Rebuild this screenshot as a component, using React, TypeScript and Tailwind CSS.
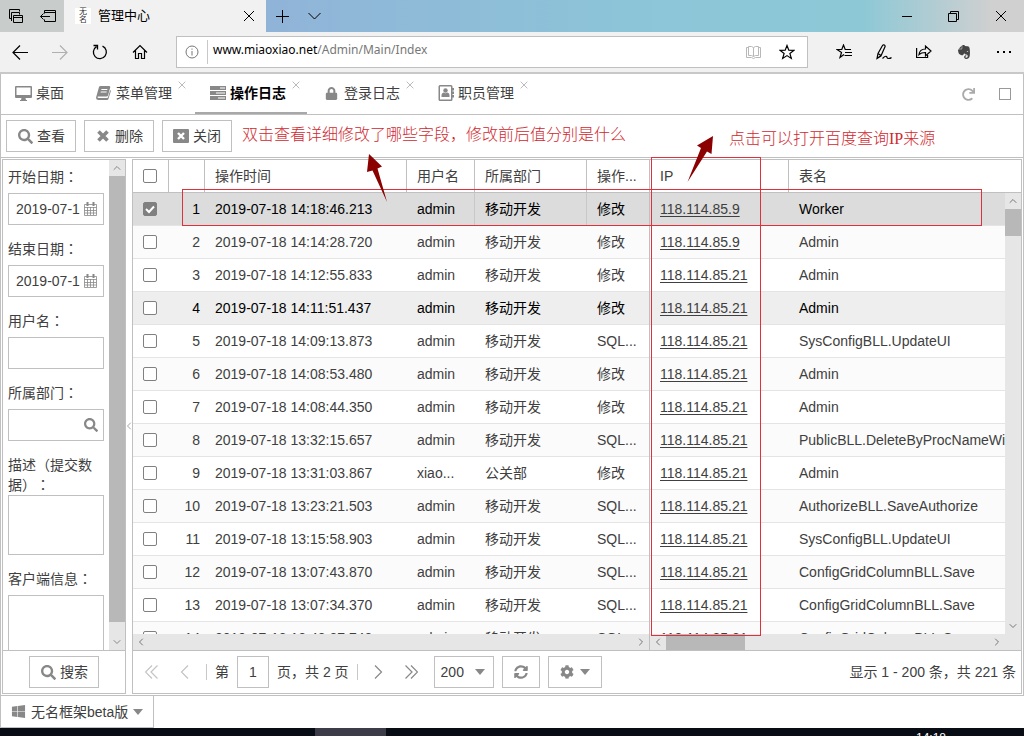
import { useState, type ReactNode } from "react";
import clsx from "clsx";
import { ChevronDown, ChevronLeft, ChevronRight, ChevronUp } from "lucide-react";
import {
	FaCog,
	FaEvernote,
	FaLock,
	FaRedo,
	FaSearch,
	FaSyncAlt,
	FaWindows,
} from "react-icons/fa";

type LogRow = {
	id: number;
	time: string;
	user: string;
	dept: string;
	action: string;
	ip: string;
	table: string;
};

const rows: LogRow[] = [
	{ id: 1, time: "2019-07-18 14:18:46.213", user: "admin", dept: "移动开发", action: "修改", ip: "118.114.85.9", table: "Worker" },
	{ id: 2, time: "2019-07-18 14:14:28.720", user: "admin", dept: "移动开发", action: "修改", ip: "118.114.85.9", table: "Admin" },
	{ id: 3, time: "2019-07-18 14:12:55.833", user: "admin", dept: "移动开发", action: "修改", ip: "118.114.85.21", table: "Admin" },
	{ id: 4, time: "2019-07-18 14:11:51.437", user: "admin", dept: "移动开发", action: "修改", ip: "118.114.85.21", table: "Admin" },
	{ id: 5, time: "2019-07-18 14:09:13.873", user: "admin", dept: "移动开发", action: "SQL...", ip: "118.114.85.21", table: "SysConfigBLL.UpdateUI" },
	{ id: 6, time: "2019-07-18 14:08:53.480", user: "admin", dept: "移动开发", action: "修改", ip: "118.114.85.21", table: "Admin" },
	{ id: 7, time: "2019-07-18 14:08:44.350", user: "admin", dept: "移动开发", action: "修改", ip: "118.114.85.21", table: "Admin" },
	{ id: 8, time: "2019-07-18 13:32:15.657", user: "admin", dept: "移动开发", action: "SQL...", ip: "118.114.85.21", table: "PublicBLL.DeleteByProcNameWithLog" },
	{ id: 9, time: "2019-07-18 13:31:03.867", user: "xiao...", dept: "公关部", action: "修改", ip: "118.114.85.21", table: "Admin" },
	{ id: 10, time: "2019-07-18 13:23:21.503", user: "admin", dept: "移动开发", action: "SQL...", ip: "118.114.85.21", table: "AuthorizeBLL.SaveAuthorize" },
	{ id: 11, time: "2019-07-18 13:15:58.903", user: "admin", dept: "移动开发", action: "SQL...", ip: "118.114.85.21", table: "SysConfigBLL.UpdateUI" },
	{ id: 12, time: "2019-07-18 13:07:43.870", user: "admin", dept: "移动开发", action: "SQL...", ip: "118.114.85.21", table: "ConfigGridColumnBLL.Save" },
	{ id: 13, time: "2019-07-18 13:07:34.370", user: "admin", dept: "移动开发", action: "SQL...", ip: "118.114.85.21", table: "ConfigGridColumnBLL.Save" },
	{ id: 14, time: "2019-07-18 12:48:27.743", user: "admin", dept: "移动开发", action: "SQL...", ip: "118.114.85.21", table: "ConfigGridColumnBLL.Save" },
];

export default function App() {
	return (
		<div className="flex h-screen flex-col overflow-hidden bg-white font-['Liberation_Sans','Noto_Sans_CJK_SC',sans-serif] text-sm text-[#404040]">
			<TitleBar />
			<AddressBar />
			<div className="flex min-h-0 flex-1 flex-col border-x border-[#c0c0c0]">
				<PageTabs />
				<main className="relative flex min-h-0 flex-1 flex-col">
					<Toolbar />
					<div className="flex min-h-0 flex-1 gap-1.5 border-b border-[#c0c0c0] p-px">
						<SearchPanel />
						<LogPanel />
					</div>
					<Annotations />
				</main>
			</div>
			<StartBar />
			<OsTaskbar />
		</div>
	);
}

function TitleBar() {
	return (
		<header className="flex h-8 shrink-0 bg-[linear-gradient(to_right,#90b4d8_27%,#8cc6d8_65%,#8cc8d6_84%,#d0d0d0_97%)] text-black">
			<div className="flex w-16 items-center gap-4 bg-[#c8cccb] pl-2">
				<button aria-label="标签页预览">
					<svg width="16" height="16" viewBox="0 0 16 16" fill="none" stroke="currentColor">
						<path d="M3.500 10.500h-2v-9h10v2M3.500 13V4.500h8v2M6 7.500h8.500v7H5.500v-7zM6 9.500h8" />
					</svg>
				</button>
				<button aria-label="搁置标签页">
					<svg width="16" height="16" viewBox="0 0 16 16" fill="none" stroke="currentColor">
						<path d="M4.500 5.500v-3h11v11h-11v-2M4.500 4.500h11M.5 8.500H10M3.500 5.500l-3 3 3 3" />
					</svg>
				</button>
			</div>
			<div className="flex w-[202px] items-center bg-[#f1f1f1] px-[11px]">
				<span className="flex size-4 flex-col items-center justify-center bg-white text-[8px] leading-2 text-[#333]">
					<span>无</span>
					<span>名</span>
				</span>
				<span className="ml-[7px] flex-1 text-[13px]">管理中心</span>
				<button aria-label="关闭标签页">
					<CrossIcon className="size-3" />
				</button>
			</div>
			<div className="flex flex-1 items-center gap-[18px] pl-2.5">
				<button aria-label="新建标签页">
					<svg width="14" height="14" viewBox="0 0 14 14" stroke="currentColor">
						<path d="M6.500 1v13M0 7.500h13" />
					</svg>
				</button>
				<button aria-label="标签页列表">
					<svg width="13" height="8" viewBox="0 0 13 8" fill="none" stroke="currentColor">
						<path d="M.5 1l6 6 6-6" />
					</svg>
				</button>
			</div>
			<div className="flex items-center gap-9 pr-[17px]">
				<button aria-label="最小化">
					<svg width="10" height="10" viewBox="0 0 10 10" stroke="currentColor">
						<path d="M0 5.500h10" />
					</svg>
				</button>
				<button aria-label="还原">
					<svg width="11" height="11" viewBox="0 0 11 11" fill="none" stroke="currentColor">
						<path d="M.5 2.500h8v8h-8zM2.500 2.500v-2h8v8h-2" />
					</svg>
				</button>
				<button aria-label="关闭">
					<CrossIcon className="size-3" />
				</button>
			</div>
		</header>
	);
}

function AddressBar() {
	return (
		<nav className="flex h-[42px] shrink-0 items-center border-b-2 border-[#c8c8c8] bg-[#f1f1f1] text-black">
			<div className="flex w-44 items-center gap-6 pl-3">
				<button aria-label="后退">
					<svg width="16" height="16" viewBox="0 0 16 16" fill="none" stroke="currentColor" strokeWidth="1.2">
						<path d="M1 8.500h15M8 1.500l-7 7 7 7" />
					</svg>
				</button>
				<button aria-label="前进" className="text-[#b0b0b0]">
					<svg width="16" height="16" viewBox="0 0 16 16" fill="none" stroke="currentColor" strokeWidth="1.2">
						<path d="M0 8.500h15M8 1.500l7 7-7 7" />
					</svg>
				</button>
				<button aria-label="刷新">
					<svg width="16" height="16" viewBox="0 0 16 16" fill="none" stroke="currentColor" strokeWidth="1.3">
						<path d="M10.500 2.200A6.500 6.500 0 1 1 4.500 2.600M1.500 1.500h4v4" />
					</svg>
				</button>
				<button aria-label="主页">
					<svg width="16" height="16" viewBox="0 0 16 16" fill="none" stroke="currentColor" strokeWidth="1.2">
						<path d="M1 8.500l7-7 7 7M3.500 6.500v8h3v-5h3v5h3v-8" />
					</svg>
				</button>
			</div>
			<div className="flex h-8 flex-1 items-center border border-[#c0c0c0] bg-white">
				<svg className="ml-2 shrink-0 text-[#777]" width="14" height="14" viewBox="0 0 14 14" fill="none" stroke="currentColor">
					<circle cx="7" cy="7" r="6" />
					<path d="M7 6v4.500M7 3.500v1.200" />
				</svg>
				<a
					href="#"
					className="ml-2 flex-1 border-l border-[#c8c8c8] pb-1 pl-[5px] font-['Noto_Sans',sans-serif] text-xs leading-5 text-[#777]"
				>
					<span className="text-black">www.miaoxiao.net</span>/Admin/Main/Index
				</a>
				<button aria-label="阅读视图" className="mr-[18px] text-[#b8b8b8]">
					<svg width="15" height="14" viewBox="0 0 15 14" fill="none" stroke="currentColor">
						<path d="M2.500 1.500h3l2 1 2-1h3v9h-3l-2 1-2-1h-3zM7.500 2.500v9M2.500 2.500h-2v10h5l2 1 2-1h5v-10h-2" />
					</svg>
				</button>
				<button aria-label="收藏" className="mr-3">
					<svg width="16" height="16" viewBox="0 0 16 16" fill="none" stroke="currentColor" strokeWidth="1.200">
						<path d="M8 1.500l1.800 4.700 5 .2-3.900 3.100 1.400 4.900L8 11.600l-4.300 2.800 1.400-4.900L1.200 6.400l5-.2z" />
					</svg>
				</button>
			</div>
			<div className="flex items-center gap-6 pr-3 pl-7">
				<button aria-label="中心">
					<svg width="16" height="16" viewBox="0 0 16 16" fill="none" stroke="currentColor" strokeWidth="1.200">
						<path d="M8 10.500l-4 3 1.500-5L1 5.500h4.800L7.500 1l1.700 4.500H15M9 8.500h7M8.500 11.500H16" />
					</svg>
				</button>
				<button aria-label="做笔记">
					<svg width="16" height="16" viewBox="0 0 16 16" fill="none" stroke="currentColor" strokeWidth="1.200">
						<path d="M1 14.500l1-5 4.500-8c1-1.500 3.200-.2 2.400 1.500l-4 9zM2 9.500l3 2M1 14.500l4-3M6.500 14.500c2-2 3-3 4-2s0 2 2 2c1 0 2 0 3-1" />
					</svg>
				</button>
				<button aria-label="共享">
					<svg width="16" height="16" viewBox="0 0 16 16" fill="none" stroke="currentColor" strokeWidth="1.200">
						<path d="M.6 4v9.500h11V11M3 10.500c.5-4 3-5.500 6.500-5.500V2l5.500 5-5.500 5V8.500C6.500 8.500 4.500 9 3 10.500z" />
					</svg>
				</button>
				<button aria-label="Evernote" className="text-[#444]">
					<FaEvernote size={16} />
				</button>
				<button aria-label="更多">
					<svg width="16" height="4" viewBox="0 0 16 4" fill="currentColor">
						<path d="M1 1h2v2H1zM7 1h2v2H7zM13 1h2v2h-2z" />
					</svg>
				</button>
			</div>
		</nav>
	);
}

const pageTabs: { title: string; icon: ReactNode; closable?: boolean }[] = [
	{ title: "桌面", icon: <DesktopIcon /> },
	{ title: "菜单管理", icon: <BookIcon />, closable: true },
	{ title: "操作日志", icon: <TasksIcon />, closable: true },
	{ title: "登录日志", icon: <FaLock size={13} />, closable: true },
	{ title: "职员管理", icon: <ContactIcon />, closable: true },
];

function PageTabs() {
	const [active, setActive] = useState("操作日志");

	return (
		<div className="flex h-[41px] shrink-0 items-stretch justify-between border-b border-[#c0c0c0]">
			<div className="flex gap-0.5">
				{pageTabs.map((tab) => (
					<div
						key={tab.title}
						className={clsx(
							"relative flex border-b-2",
							active === tab.title ? "border-[#a8a8a8] font-bold text-black" : "border-transparent",
							tab.closable ? "w-28" : "w-[78px]",
						)}
					>
						<button
							className="flex items-center gap-1 pl-3.5"
							onClick={() => setActive(tab.title)}
						>
							<span className="flex w-[17px] justify-center text-[#888]">{tab.icon}</span>
							{tab.title}
						</button>
						{tab.closable && (
							<button
								aria-label={`关闭${tab.title}`}
								className="absolute top-[7px] right-[7px] text-[#999]"
							>
								<CrossIcon className="size-2" />
							</button>
						)}
					</div>
				))}
			</div>
			<div className="flex items-center gap-6 pr-3 text-[#aaa]">
				<button aria-label="刷新">
					<FaRedo size={13} />
				</button>
				<button aria-label="最大化" className="h-3 w-3 border border-[#999]" />
			</div>
		</div>
	);
}

function Toolbar() {
	return (
		<div className="flex h-[43px] shrink-0 items-center gap-2 border-b border-[#c0c0c0] px-[5px]">
			<ToolButton icon={<FaSearch size={15} />}>查看</ToolButton>
			<ToolButton
				icon={
					<svg width="12" height="12" viewBox="0 0 12 12" stroke="currentColor" strokeWidth="3.600">
						<path d="M1.500 1.500l9 9M10.500 1.500l-9 9" />
					</svg>
				}
			>
				删除
			</ToolButton>
			<ToolButton
				icon={
					<svg width="16" height="14" viewBox="0 0 16 14">
						<path d="M1 0h14q1 0 1 1v12q0 1-1 1H1q-1 0-1-1V1q0-1 1-1z" fill="currentColor" />
						<path d="M5 4l6 6M11 4l-6 6" stroke="#fff" strokeWidth="2.400" />
					</svg>
				}
			>
				关闭
			</ToolButton>
		</div>
	);
}

function ToolButton({ icon, children }: { icon: ReactNode; children: ReactNode }) {
	return (
		<button className="flex h-8 w-[70px] items-center justify-center gap-1 border border-[#c0c0c0] bg-white">
			<span className="flex w-4 justify-center text-[#888]">{icon}</span>
			{children}
		</button>
	);
}

function SearchPanel() {
	return (
		<form
			className="flex w-[124px] shrink-0 flex-col border border-[#c0c0c0]"
			onSubmit={(e) => e.preventDefault()}
		>
			<div className="flex min-h-0 flex-1">
				<div className="min-w-0 flex-1 overflow-hidden px-[5px]">
					<Field id="start" label="开始日期">
						<DateInput id="start" />
					</Field>
					<Field id="end" label="结束日期">
						<DateInput id="end" />
					</Field>
					<Field id="user" label="用户名">
						<input id="user" className="block h-8 w-full border border-[#c0c0c0] px-1.5" />
					</Field>
					<Field id="dept" label="所属部门">
						<div className="flex h-8 items-center border border-[#c0c0c0] pr-[5px]">
							<input id="dept" className="min-w-0 flex-1 px-1.5" />
							<button aria-label="选择部门" className="text-[#888]">
								<FaSearch size={14} />
							</button>
						</div>
					</Field>
					<Field id="desc" label="描述（提交数据）">
						<textarea id="desc" className="block h-15 w-full resize-none border border-[#c0c0c0]" />
					</Field>
					<Field id="client" label="客户端信息">
						<textarea id="client" className="block h-15 w-full resize-none border border-[#c0c0c0]" />
					</Field>
				</div>
				<div className="flex w-4 flex-col items-center bg-[#e6e6e6] text-[#888]">
					<ChevronUp size={12} className="my-0.5" />
					<div className="w-full flex-1 bg-[#b8b8b8]" />
					<ChevronDown size={12} className="mt-3.5 mb-0.5" />
				</div>
			</div>
			<div className="flex h-[43px] shrink-0 items-center justify-center border-t border-[#c0c0c0]">
				<ToolButton icon={<FaSearch size={15} />}>搜索</ToolButton>
			</div>
		</form>
	);
}

function Field({ id, label, children }: { id: string; label: string; children: ReactNode }) {
	return (
		<div className="pb-[7px]">
			<label
				htmlFor={id}
				className="block min-h-[33px] pt-[7px] leading-5 [text-spacing-trim:space-all]"
			>
				{label}
				<span className="inline-block font-['Noto_Sans_CJK_TC',sans-serif] leading-none">：</span>
			</label>
			{children}
		</div>
	);
}

function DateInput({ id }: { id: string }) {
	return (
		<div className="flex h-8 items-center border border-[#c0c0c0] pr-1.5 pl-[7px]">
			<input id={id} defaultValue="2019-07-1" className="min-w-0 flex-1" />
			<button aria-label="选择日期" className="text-[#888]">
				<CalendarIcon />
			</button>
		</div>
	);
}

function LogPanel() {
	const [checked, setChecked] = useState<number[]>([1]);

	function toggle(id: number) {
		setChecked(checked.includes(id) ? checked.filter((c) => c !== id) : [...checked, id]);
	}

	return (
		<section className="relative flex min-w-0 flex-1 flex-col border border-[#c0c0c0]">
			<ChevronLeft size={12} strokeWidth={1.5} className="absolute top-65 -left-2.5 text-[#888]" />
			<div className="flex min-h-0 flex-1">
				<div className="flex w-[517px] shrink-0 flex-col border-r border-[#c0c0c0]">
					<div className="min-h-0 flex-1 overflow-hidden">
						<table className="w-full table-fixed border-separate border-spacing-0 text-left">
							<colgroup>
								<col className="w-9" />
								<col className="w-9" />
								<col className="w-[202px]" />
								<col className="w-[68px]" />
								<col className="w-28" />
								<col />
							</colgroup>
							<thead>
								<tr>
									<HeadCell>
										<Checkbox
											label="全选"
											checked={checked.length === rows.length}
											onChange={() =>
												setChecked(checked.length === rows.length ? [] : rows.map((r) => r.id))
											}
										/>
									</HeadCell>
									<HeadCell />
									<HeadCell>操作时间</HeadCell>
									<HeadCell>用户名</HeadCell>
									<HeadCell>所属部门</HeadCell>
									<HeadCell last>操作...</HeadCell>
								</tr>
							</thead>
							<tbody>
								{rows.map((row) => (
									<tr key={row.id} className={rowClass(row.id)}>
										<Cell>
											<Checkbox
												label={`选择第 ${row.id} 行`}
												checked={checked.includes(row.id)}
												onChange={() => toggle(row.id)}
											/>
										</Cell>
										<td className="h-[33px] border-b border-[#e4e4e4] pr-[5px] text-right">{row.id}</td>
										<Cell>{row.time}</Cell>
										<Cell>{row.user}</Cell>
										<Cell focused={row.id === 1}>{row.dept}</Cell>
										<Cell>{row.action}</Cell>
									</tr>
								))}
							</tbody>
						</table>
					</div>
					<div className="flex h-4 items-center justify-between bg-[#e6e6e6] px-0.5 text-[#777]">
						<ChevronLeft size={12} />
						<ChevronRight size={12} />
					</div>
				</div>

				<div className="flex min-w-0 flex-1 flex-col">
					<div className="flex min-h-0 flex-1">
						<div className="min-w-0 flex-1 overflow-hidden">
							<table className="w-full table-fixed border-separate border-spacing-0 text-left">
								<colgroup>
									<col className="w-[139px]" />
									<col />
								</colgroup>
								<thead>
									<tr>
										<HeadCell>IP</HeadCell>
										<HeadCell last>表名</HeadCell>
									</tr>
								</thead>
								<tbody>
									{rows.map((row) => (
										<tr key={row.id} className={rowClass(row.id)}>
											<Cell>
												<a href="#" className="text-[#404040] underline underline-offset-2">
													{row.ip}
												</a>
											</Cell>
											<Cell>{row.table}</Cell>
										</tr>
									))}
								</tbody>
							</table>
						</div>
						<div className="flex w-4 flex-col pt-8">
							<div className="flex flex-1 flex-col items-center border-t border-[#c0c0c0] bg-[#e6e6e6] text-[#777]">
								<ChevronUp size={12} className="my-0.5" />
								<div className="h-[27px] w-full bg-[#b8b8b8]" />
								<ChevronDown size={12} className="mt-auto mb-0.5" />
							</div>
						</div>
					</div>
					<div className="flex h-4 items-center bg-[#e6e6e6] pr-[18px] text-[#777]">
						<ChevronLeft size={12} className="mx-0.5" />
						<div className="h-full w-[79px] bg-[#b8b8b8]" />
						<ChevronRight size={12} className="ml-auto" />
					</div>
				</div>
			</div>
			<Pager />
		</section>
	);
}

function rowClass(id: number) {
	if (id === 1) return "bg-[#dcdcdc] text-black";
	if (id === 4) return "bg-[#eeeeee] text-black";
	return id % 2 === 0 ? "bg-[#fbfbfb]" : "bg-white";
}

function HeadCell({ children, last }: { children?: ReactNode; last?: boolean }) {
	return (
		<th
			className={clsx(
				"h-[33px] overflow-hidden border-b border-[#c0c0c0] pl-2.5 font-normal whitespace-nowrap",
				!last && "border-r",
			)}
		>
			{children}
		</th>
	);
}

function Cell({ children, focused }: { children: ReactNode; focused?: boolean }) {
	return (
		<td
			className={clsx(
				"h-[33px] overflow-hidden border-b border-[#e4e4e4] pl-2.5 whitespace-nowrap",
				focused && "border-r border-r-[#c8c8c8] shadow-[-1px_0_0_#c8c8c8]",
			)}
		>
			{children}
		</td>
	);
}

function Checkbox({
	label,
	checked,
	onChange,
}: {
	label: string;
	checked: boolean;
	onChange: () => void;
}) {
	return (
		<span className="relative block size-3.5">
			<input
				type="checkbox"
				aria-label={label}
				checked={checked}
				onChange={onChange}
				className="block size-3.5 appearance-none rounded-xs border border-[#808080] bg-white checked:bg-[#808080]"
			/>
			{checked && (
				<svg
					className="pointer-events-none absolute inset-0 text-white"
					width="14"
					height="14"
					viewBox="0 0 14 14"
					fill="none"
					stroke="currentColor"
					strokeWidth="2"
				>
					<path d="M3 7l3 3 5-5.500" />
				</svg>
			)}
		</span>
	);
}

function Pager() {
	return (
		<div className="flex h-[43px] shrink-0 items-center border-t border-[#c0c0c0] pr-[5px] pl-3">
			<button aria-label="首页" className="text-[#c4c4c4]">
				<PagerArrow d="M7 .5l-6.500 6.500 6.500 6.500M12.500 .5l-6.500 6.500 6.500 6.500" />
			</button>
			<button aria-label="上一页" className="ml-5 text-[#c4c4c4]">
				<PagerArrow d="M10 .5l-6.500 6.500 6.500 6.500" />
			</button>
			<span className="ml-[15px] h-4 border-l border-[#c8c8c8]" />
			<label htmlFor="page" className="ml-2">
				第
			</label>
			<input
				id="page"
				defaultValue="1"
				className="mx-2 h-8 w-8 border border-[#c0c0c0] text-center"
			/>
			<span>页，共 2 页</span>
			<span className="ml-2 h-4 border-l border-[#c8c8c8]" />
			<button aria-label="下一页" className="ml-3.5 text-[#888]">
				<PagerArrow d="M3 .5l6.500 6.500-6.500 6.500" />
			</button>
			<button aria-label="末页" className="ml-5 text-[#888]">
				<PagerArrow d="M.5 .5l6.500 6.500-6.500 6.500M6 .5l6.500 6.500-6.500 6.500" />
			</button>
			<div className="relative ml-4 flex h-8 w-15 items-center border border-[#c0c0c0]">
				<select
					aria-label="每页条数"
					defaultValue="200"
					className="h-full w-full appearance-none pl-1.5"
				>
					<option>50</option>
					<option>100</option>
					<option>200</option>
				</select>
				<Caret className="pointer-events-none absolute right-2" />
			</div>
			<button
				aria-label="刷新"
				className="ml-2 flex h-8 w-[38px] items-center justify-center border border-[#c0c0c0] text-[#888]"
			>
				<FaSyncAlt size={14} />
			</button>
			<button
				aria-label="设置"
				className="ml-2 flex h-8 w-[54px] items-center justify-center gap-1.5 border border-[#c0c0c0] text-[#888]"
			>
				<FaCog size={14} />
				<Caret />
			</button>
			<span className="ml-auto whitespace-nowrap">显示 1 - 200 条，共 221 条</span>
		</div>
	);
}

function PagerArrow({ d }: { d: string }) {
	return (
		<svg width="13" height="14" viewBox="0 0 13 14" fill="none" stroke="currentColor" strokeWidth="1.200">
			<path d={d} />
		</svg>
	);
}

// Hand-drawn notes that lie over the toolbar and the grid
function Annotations() {
	return (
		<div className="pointer-events-none absolute inset-0 font-['Liberation_Serif','Noto_Sans_CJK_SC',sans-serif] text-base leading-6 font-light text-[#d0282e]">
			<p className="absolute top-2 left-[241px] whitespace-nowrap">
				双击查看详细修改了哪些字段，修改前后值分别是什么
			</p>
			<p className="absolute top-3 left-[728px] whitespace-nowrap">
				点击可以打开百度查询IP来源
			</p>
			<div className="absolute top-[74px] left-[181px] h-[37px] w-[800px] border border-[#e0303c]" />
			<div className="absolute top-[42px] left-[650px] h-[479px] w-[110px] border border-[#e0303c]" />
			<svg
				className="absolute top-[39px] left-[366px]"
				width="22"
				height="50"
				viewBox="0 0 22 50"
				fill="#8b0000"
			>
				<path d="M2 0L15 12.500L10.500 14.500L20 48L5.500 16.500L0 18z" />
			</svg>
			<svg
				className="absolute top-[21px] left-[685px]"
				width="28"
				height="46"
				viewBox="0 0 28 46"
				fill="#8b0000"
			>
				<path d="M27 0L25.500 18L21 15.500L1.500 46L15 12L11 9.500z" />
			</svg>
		</div>
	);
}

function StartBar() {
	return (
		<footer className="flex h-8 shrink-0 bg-white">
			<button className="flex items-center gap-[5px] border border-t-0 border-[#c0c0c0] px-2.5 whitespace-nowrap">
				<FaWindows size={15} className="text-[#888]" />
				无名框架beta版
				<Caret />
			</button>
		</footer>
	);
}

function OsTaskbar() {
	return (
		<div className="flex h-2 shrink-0 justify-between overflow-hidden bg-[#080c14]">
			<div className="ml-[315px] h-full w-[71px] bg-[#3c3c48]" />
			<time className="mr-[78px] pt-1 text-xs leading-3 text-white">14:18</time>
		</div>
	);
}

function Caret({ className }: { className?: string }) {
	return (
		<svg className={className} width="10" height="6" viewBox="0 0 10 6" fill="#888">
			<path d="M0 0h10L5 6z" />
		</svg>
	);
}

function CrossIcon({ className }: { className?: string }) {
	return (
		<svg className={className} viewBox="0 0 12 12" stroke="currentColor" fill="none">
			<path d="M1 1l10 10M11 1L1 11" />
		</svg>
	);
}

function DesktopIcon() {
	return (
		<svg width="17" height="15" viewBox="0 0 17 15" fill="currentColor">
			<path
				fillRule="evenodd"
				d="M1 0h15q1 0 1 1v10q0 1-1 1h-5.500l.5 2h1v1H5v-1h1l.5-2H1q-1 0-1-1V1q0-1 1-1zM1.500 1.500V9h14V1.500z"
			/>
		</svg>
	);
}

function BookIcon() {
	return (
		<svg width="15" height="14" viewBox="0 0 15 14" fill="currentColor">
			<path
				fillRule="evenodd"
				d="M4.500 0H13q1.500 0 1.200 1.500L12 9.500q-.3 1-1.500 1H2.200q-.8 0-.7.800.2.700 1 .7h8.500q.8 0 1-.8L14.200 4q.8.5.6 1.200l-2.300 7.500Q12.200 14 11 14H2Q-.5 13.500.2 11L3 1q.3-1 1.500-1zM5.500 3l-.3 1h6l.3-1zM4.800 5.500l-.3 1h6l.3-1z"
			/>
		</svg>
	);
}

function TasksIcon() {
	return (
		<svg width="16" height="14" viewBox="0 0 16 14">
			<path d="M0 0h16v4H0zM0 5h16v4H0zM0 10h16v4H0z" fill="currentColor" />
			<path d="M10 1.500h5v1h-5zM6 6.500h9v1H6zM8 11.500h7v1H8z" fill="#fff" />
		</svg>
	);
}

function ContactIcon() {
	return (
		<svg width="16" height="16" viewBox="0 0 16 16" fill="currentColor">
			<path
				fillRule="evenodd"
				d="M2 0h11q1.500 0 1.500 1.500V3H16v2.500h-1.500v1H16V9h-1.500v1H16v2.500h-1.500v2Q14.500 16 13 16H2Q.5 16 .5 14.500v-13Q.5 0 2 0zM2 1.500v13h11v-13z"
			/>
			<circle cx="7.500" cy="5.500" r="2.200" />
			<path d="M3.500 12v-2q0-2 2-2.500 2 1.500 4 0 2 .5 2 2.500v2z" />
		</svg>
	);
}

function CalendarIcon() {
	return (
		<svg width="13" height="14" viewBox="0 0 13 14" fill="none" stroke="currentColor">
			<path d="M.5 2.500h12v11H.5zM.5 5.500h12M.5 8.500h12M.5 11h12M3.500 5v8M6.500 5v8M9.500 5v8" strokeOpacity="0.8" />
			<path d="M3.500 0v4M9.500 0v4" strokeWidth="2" />
		</svg>
	);
}
